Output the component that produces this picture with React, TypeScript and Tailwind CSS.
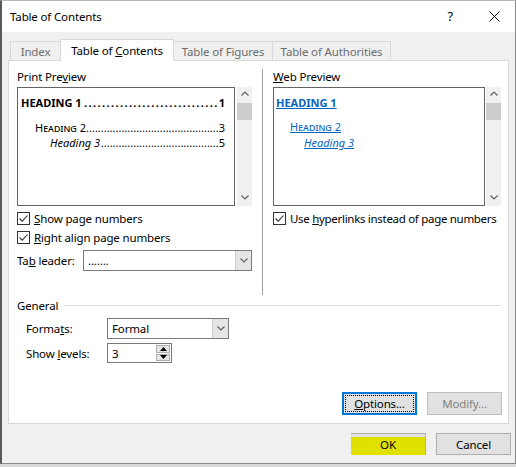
function Chevron({ dir = "down", color = "#606060" }: { dir?: "up" | "down"; color?: string }) {
  return (
    <svg width="8" height="5" viewBox="0 0 8 5">
      <path
        d={dir === "down" ? "M0.5 0.5 L4 4 L7.5 0.5" : "M0.5 4.5 L4 1 L7.5 4.5"}
        stroke={color}
        strokeWidth="1.2"
        fill="none"
      />
    </svg>
  );
}

function VScroll() {
  return (
    <div className="w-[15px] h-full bg-[#f0f0f0] flex flex-col items-center">
      <div className="mt-[4px] h-[5px] flex items-center">
        <Chevron dir="up" />
      </div>
      <div className="mt-[7px] w-[15px] h-[17px] bg-[#cdcdcd]" />
      <div className="flex-1" />
      <div className="mb-[6px] h-[5px] flex items-center">
        <Chevron dir="down" />
      </div>
    </div>
  );
}

function Checkbox({ children }: { children: React.ReactNode }) {
  return (
    <div className="flex items-center h-[15px] whitespace-nowrap">
      <span className="w-[13px] h-[13px] shrink-0 border border-[#333333] bg-white flex items-center justify-center">
        <svg width="11" height="11" viewBox="0 0 11 11">
          <path d="M1.5 5.5 L4.2 8.2 L9.5 2.5" stroke="#333333" strokeWidth="1.1" fill="none" />
        </svg>
      </span>
      <span className="ml-[4px]">{children}</span>
    </div>
  );
}

function Combo({ value, width }: { value: string; width: string }) {
  return (
    <div className={`${width} h-full border border-[#7a7a7a] bg-white flex`}>
      <div className="flex-1 flex items-center pl-[4px]">{value}</div>
      <div className="w-[16px] h-full bg-[#e5e5e5] border-l border-[#cccccc] flex items-center justify-center">
        <Chevron />
      </div>
    </div>
  );
}

function Tab({ label, width, selected }: { label: React.ReactNode; width: string; selected?: boolean }) {
  return (
    <div
      className={
        selected
          ? `${width} -ml-px h-[22px] -mb-px relative z-10 bg-white border border-b-0 border-[#d9d9d9] flex items-center justify-center text-black`
          : `${width} -ml-px first:ml-0 h-[19px] bg-[#f0f0f0] border border-b-0 border-[#d9d9d9] flex items-center justify-center text-[#6d6d6d]`
      }
    >
      {label}
    </div>
  );
}

function Leader({
  text,
  dots,
  num,
  className,
  dotClass = "",
}: {
  text: string;
  dots: number;
  num: string;
  className: string;
  dotClass?: string;
}) {
  return (
    <div className="flex h-[15px] whitespace-nowrap">
      <span className={className}>{text}</span>
      <span className={`flex-1 text-right ${dotClass}`}>{".".repeat(dots)}</span>
      <span>{num}</span>
    </div>
  );
}

export default function App() {
  return (
    <div className="w-[516px] h-[467px] bg-[#d9d9d9] text-[11.5px] tracking-[-0.15px] text-black font-['Noto_Sans',sans-serif] leading-[15px]">
      <div className="w-[516px] h-[464px] border border-[#8a8a8a] border-l-2 border-l-[#5a5a5a] border-t-[#b8b8b8] bg-[#f0f0f0] flex flex-col">
        {/* title bar */}
        <div className="h-[31px] bg-white flex items-center pl-[8px] shrink-0">
          <span>Table of Contents</span>
          <span className="ml-auto text-[13px]">?</span>
          <svg className="ml-[36px] mr-[15px]" width="11" height="11" viewBox="0 0 11 11">
            <path d="M0.5 0.5 L10.5 10.5 M10.5 0.5 L0.5 10.5" stroke="#000" strokeWidth="1" />
          </svg>
        </div>

        {/* tabs */}
        <div className="mt-[7px] ml-[8px] h-[21px] flex items-end">
          <Tab label="Index" width="w-[51px]" />
          <Tab
            label={
              <span>
                Table of <u>C</u>ontents
              </span>
            }
            width="w-[114px]"
            selected
          />
          <Tab label="Table of Figures" width="w-[100px]" />
          <Tab label="Table of Authorities" width="w-[119px]" />
        </div>

        {/* panel */}
        <div className="ml-[6px] mr-[6px] h-[364px] bg-white border border-[#d9d9d9] flex flex-col">
          <div className="mt-[8px] pl-[8px] h-[226px] flex">
            {/* left column */}
            <div className="w-[235px] flex flex-col">
              <div className="h-[15px]">
                Print Pre<u>v</u>iew
              </div>
              <div className="mt-[3px] h-[119px] flex">
                <div className="w-[219px] h-full border border-[#646464] pl-[3px] pr-[9px] pt-[7px] text-[11px] tracking-normal">
                  <div className="font-bold">
                    <Leader text="HEADING 1" dots={30} num="1" className="" dotClass="tracking-[1.4px]" />
                  </div>
                  <div className="mt-[10px] pl-[14px]">
                    <Leader text="Heading 2" dots={45} num="3" className="[font-variant:small-caps]" />
                  </div>
                  <div className="pl-[29px]">
                    <Leader text="Heading 3" dots={40} num="5" className="italic" />
                  </div>
                </div>
                <div className="ml-[2px] h-full">
                  <VScroll />
                </div>
              </div>
              <div className="mt-[5px]">
                <Checkbox>
                  <u>S</u>how page numbers
                </Checkbox>
              </div>
              <div className="mt-[4px]">
                <Checkbox>
                  <u>R</u>ight align page numbers
                </Checkbox>
              </div>
              <div className="mt-[5px] h-[21px] flex items-center">
                <span className="w-[66px]">
                  Ta<u>b</u> leader:
                </span>
                <Combo value="......." width="w-[169px]" />
              </div>
            </div>

            {/* separator */}
            <div className="ml-[10px] w-px bg-[#a0a0a0]" />

            {/* right column */}
            <div className="ml-[10px] w-[228px] flex flex-col">
              <div className="h-[15px]">
                <u>W</u>eb Preview
              </div>
              <div className="mt-[3px] h-[119px] flex">
                <div className="w-[212px] h-full border border-[#646464] pl-[2px] pt-[7px] text-[11px] tracking-normal text-[#0563c1]">
                  <div className="h-[15px] font-bold underline">HEADING 1</div>
                  <div className="h-[15px] mt-[9px] pl-[14px]">
                    <span className="underline [font-variant:small-caps]">Heading 2</span>
                  </div>
                  <div className="h-[15px] mt-[1px] pl-[28px]">
                    <span className="underline italic">Heading 3</span>
                  </div>
                </div>
                <div className="ml-[1px] h-full">
                  <VScroll />
                </div>
              </div>
              <div className="mt-[5px] tracking-[-0.3px]">
                <Checkbox>
                  Use <u>h</u>yperlinks instead of page numbers
                </Checkbox>
              </div>
            </div>
          </div>

          {/* General */}
          <div className="mt-[3px] pl-[8px] pr-[7px] h-[15px] flex items-center">
            <span>General</span>
            <div className="ml-[6px] flex-1 h-px bg-[#dcdcdc]" />
          </div>
          <div className="mt-[5px] pl-[17px] h-[21px] flex items-center">
            <span className="w-[81px]">
              Forma<u>t</u>s:
            </span>
            <Combo value="Formal" width="w-[122px]" />
          </div>
          <div className="mt-[4px] pl-[17px] h-[20px] flex items-center">
            <span className="w-[81px]">
              Show <u>l</u>evels:
            </span>
            <div className="w-[65px] h-full border border-[#7a7a7a] bg-white flex">
              <div className="flex-1 flex items-center pl-[4px]">3</div>
              <div className="w-[16px] h-full flex flex-col p-px gap-px">
                <div className="flex-1 bg-[#e5e5e5] border border-[#adadad] flex items-center justify-center">
                  <svg width="7" height="4" viewBox="0 0 7 4">
                    <path d="M0 4 L3.5 0 L7 4 Z" fill="#000" />
                  </svg>
                </div>
                <div className="flex-1 bg-[#e5e5e5] border border-[#adadad] flex items-center justify-center">
                  <svg width="7" height="4" viewBox="0 0 7 4">
                    <path d="M0 0 L3.5 4 L7 0 Z" fill="#000" />
                  </svg>
                </div>
              </div>
            </div>
          </div>

          <div className="mt-auto mb-[8px] pr-[6px] flex justify-end gap-[10px]">
            <button className="w-[75px] h-[23px] bg-[#e1e1e1] border-2 border-[#0078d7] p-[1px]">
              <div className="w-full h-full border border-dotted border-black flex items-center justify-center">
                <span>
                  <u>O</u>ptions...
                </span>
              </div>
            </button>
            <button className="w-[75px] h-[23px] bg-[#e1e1e1] border border-[#bfbfbf] text-[#838383] flex items-center justify-center">
              Modify...
            </button>
          </div>
        </div>

        {/* bottom buttons */}
        <div className="mt-[9px] pr-[4px] flex justify-end gap-[10px]">
          <button className="w-[75px] h-[22px] bg-[#e1e100] border-t border-r border-[#adadad] shadow-[inset_0_3px_0_#e1e1e1] flex items-center justify-center">
            OK
          </button>
          <button className="w-[75px] h-[22px] bg-[#e1e1e1] border border-[#adadad] flex items-center justify-center">
            Cancel
          </button>
        </div>
      </div>
    </div>
  );
}
